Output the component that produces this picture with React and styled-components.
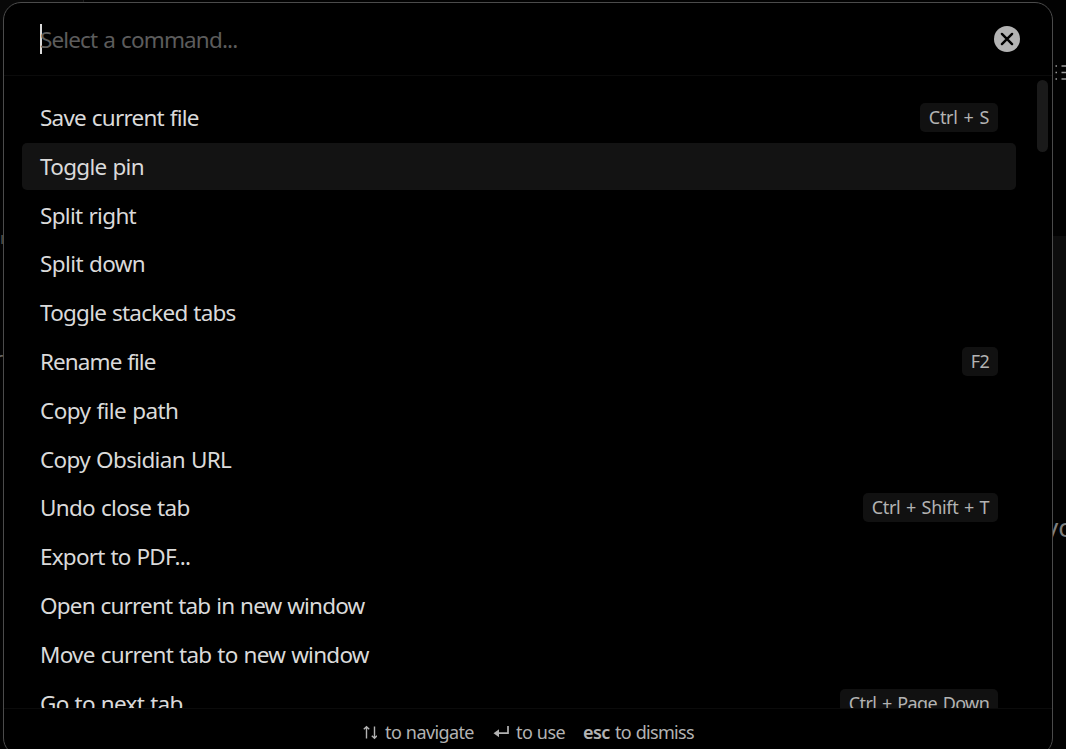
import React from 'react';
import styled, { createGlobalStyle } from 'styled-components';

const GlobalStyle = createGlobalStyle`
  * { box-sizing: border-box; }
  body { margin: 0; background: #020202; overflow: hidden; }
`;

const Screen = styled.div`
  position: relative;
  width: 1066px;
  height: 749px;
  overflow: hidden;
  padding: 2px 0 0 3px;
  background: #020202;
  color: #dadada;
  font-family: 'Segoe UI', 'Noto Sans', 'Open Sans', sans-serif;
`;

const Backdrop = styled.div`
  position: absolute;
  inset: 0;
`;

const TabStrip = styled.div`
  position: absolute;
  left: 0;
  top: 0;
  width: 84px;
  height: 30px;
  background: #080808;
  border-right: 1px solid #1c1c1c;
`;

const CodeBlock = styled.div`
  position: absolute;
  right: 0;
  top: 236px;
  width: 20px;
  height: 224px;
  background: #0d0d0d;
`;

const NoteText = styled.span`
  position: absolute;
  left: ${(p) => p.$left}px;
  top: ${(p) => p.$top}px;
  font-size: ${(p) => p.$size}px;
  line-height: 30px;
  color: ${(p) => p.$color};
`;

const OutlineIcon = styled.svg`
  position: absolute;
  left: 1054px;
  top: 62px;
`;

const Modal = styled.section`
  position: relative;
  display: flex;
  flex-direction: column;
  width: 1050px;
  height: 754px;
  overflow: hidden;
  background: #000;
  border: 1px solid #4b4b4b;
  border-radius: 18px;
`;

const SearchBar = styled.header`
  display: flex;
  align-items: center;
  flex: none;
  height: 73px;
  padding: 0 32px 0 36px;
  border-bottom: 1px solid #0b0b0b;
`;

const Caret = styled.span`
  width: 2px;
  height: 30px;
  margin-right: -2px;
  background: #dadada;
`;

const Placeholder = styled.span`
  flex: 1;
  padding-top: 2px;
  font-size: 22.5px;
  line-height: 32px;
  letter-spacing: ${(p) => p.$track}px;
  word-spacing: 1px;
  color: #5c5c5c;
`;

const ClearButton = styled.button`
  display: flex;
  padding: 0;
  border: 0;
  background: none;
`;

const Results = styled.div`
  display: flex;
  flex: none;
  height: 632px;
  overflow: hidden;
`;

const CommandList = styled.div`
  width: 1012px;
  padding: 18px 0 0 18px;
`;

const Command = styled.div`
  display: flex;
  align-items: center;
  justify-content: space-between;
  width: 994px;
  height: 47px;
  margin-bottom: 1.8px;
  padding: 0 18px;
  border-radius: 5px;
  background: ${(p) => (p.$active ? '#131313' : 'transparent')};
`;

const Label = styled.span`
  padding-top: 1.2px;
  font-size: 22.5px;
  line-height: 30px;
  white-space: nowrap;
  letter-spacing: ${(p) => p.$track}px;
  word-spacing: 0.8px;
`;

const Hotkey = styled.kbd`
  height: 29px;
  width: ${(p) => p.$width}px;
  border-radius: 5px;
  background: #111;
  color: #b3b3b3;
  font-family: inherit;
  font-size: 18px;
  line-height: 29px;
  text-align: center;
  white-space: nowrap;
  letter-spacing: ${(p) => p.$track}px;
  word-spacing: ${(p) => p.$words}px;
`;

const Scrollbar = styled.div`
  width: 11px;
  height: 72px;
  margin: 4px 0 0 21px;
  border-radius: 5.5px;
  background: #1a1a1a;
`;

const Instructions = styled.footer`
  display: flex;
  flex: none;
  height: 46px;
  padding: 9px 0 0 358px;
  border-top: 1px solid #0b0b0b;
  color: #b3b3b3;
  font-size: 18px;
  line-height: 28px;
`;

const Instruction = styled.div`
  display: flex;
  flex: none;
  width: ${(p) => p.$width}px;
  white-space: nowrap;
  letter-spacing: ${(p) => p.$track}px;
  word-spacing: 0.6px;
`;

const KeyGlyph = styled.svg`
  flex: none;
  margin-right: ${(p) => p.$gap}px;
`;

const KeyName = styled.b`
  width: 32px;
  font-weight: 600;
  letter-spacing: -0.6px;
`;

const commands = [
  { name: 'Save current file', track: -0.78, key: 'Ctrl + S', keyWidth: 78, keyTrack: -0.3, keyWords: 1.6 },
  { name: 'Toggle pin', track: -0.7, active: true },
  { name: 'Split right', track: -0.68 },
  { name: 'Split down', track: -0.6 },
  { name: 'Toggle stacked tabs', track: -0.77 },
  { name: 'Rename file', track: -0.92, key: 'F2', keyWidth: 36, keyTrack: -0.5, keyWords: 0 },
  { name: 'Copy file path', track: -0.58 },
  { name: 'Copy Obsidian URL', track: -0.66 },
  { name: 'Undo close tab', track: -0.7, key: 'Ctrl + Shift + T', keyWidth: 135, keyTrack: -0.3, keyWords: 1.2 },
  { name: 'Export to PDF...', track: -0.78 },
  { name: 'Open current tab in new window', track: -0.82 },
  { name: 'Move current tab to new window', track: -0.73 },
  { name: 'Go to next tab', track: -0.7, key: 'Ctrl + Page Down', keyWidth: 158, keyTrack: -0.62, keyWords: 1.6 },
];

export default function App() {
  return (
    <Screen>
      <GlobalStyle />
      <Backdrop>
        <TabStrip />
        <CodeBlock />
        <NoteText $left={-5} $top={344} $size={20} $color="#666">r</NoteText>
        <NoteText $left={0} $top={223} $size={16} $color="#555">ı</NoteText>
        <NoteText $left={1045} $top={512} $size={26} $color="#808080">yo</NoteText>
        <OutlineIcon width="16" height="22" stroke="#999" strokeWidth="1.7">
          <path d="M1.5 4h1.5M1.5 10.5h1.5M1.5 17h1.5M7.5 4H16M7.5 10.5H16M7.5 17H16" />
        </OutlineIcon>
      </Backdrop>
      <Modal>
        <SearchBar>
          <Caret />
          <Placeholder $track={-0.86}>Select a command...</Placeholder>
          <ClearButton aria-label="Clear">
            <svg width="26" height="26" viewBox="0 0 26 26">
              <circle cx="13" cy="13" r="13" fill="#b3b3b3" />
              <path d="M7.9 7.9l10.2 10.2M18.1 7.9L7.9 18.1" stroke="#000" strokeWidth="2.4" strokeLinecap="round" />
            </svg>
          </ClearButton>
        </SearchBar>
        <Results>
          <CommandList>
            {commands.map((c) => (
              <Command key={c.name} $active={c.active}>
                <Label $track={c.track}>{c.name}</Label>
                {c.key && (
                  <Hotkey $width={c.keyWidth} $track={c.keyTrack} $words={c.keyWords}>
                    {c.key}
                  </Hotkey>
                )}
              </Command>
            ))}
          </CommandList>
          <Scrollbar />
        </Results>
        <Instructions>
          <Instruction $width={131} $track={-0.6}>
            <KeyGlyph $gap={8} width="15" height="28" fill="none" stroke="#b3b3b3" strokeWidth="1.4">
              <path d="M4.5 20.5V9.2M1.8 11.3l2.7-2.5L7.2 11.3M12.5 8.5v11.3M9.8 17.7l2.7 2.5L15 17.7" />
            </KeyGlyph>
            to navigate
          </Instruction>
          <Instruction $width={90} $track={-0.6}>
            <KeyGlyph $gap={7} width="16" height="28" fill="none" stroke="#b3b3b3" strokeWidth="1.7">
              <path d="M15 8V15.2H3" />
              <path d="M0.5 15.2L6 11.2V19.2Z" fill="#b3b3b3" stroke="none" />
            </KeyGlyph>
            to use
          </Instruction>
          <Instruction $width={120} $track={-0.68}>
            <KeyName>esc</KeyName>
            to dismiss
          </Instruction>
        </Instructions>
      </Modal>
    </Screen>
  );
}
